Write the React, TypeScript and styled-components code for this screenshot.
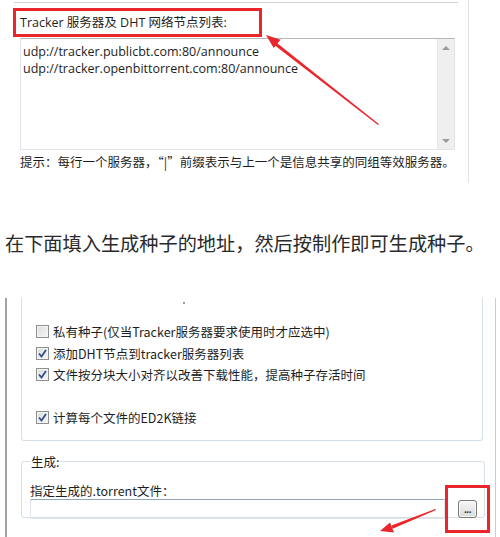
import React from 'react';
import styled, { createGlobalStyle } from 'styled-components';

const GlobalStyle = createGlobalStyle`
    html, body {
        margin: 0;
        padding: 0;
        background: #ffffff;
    }
    body {
        font-family: "Open Sans", "Noto Sans CJK SC", sans-serif;
        color: #1e1e1e;
    }
`;

const Page = styled.div`
    position: relative;
    width: 500px;
    height: 537px;
    overflow: hidden;
    background: #ffffff;
`;

const TopShot = styled.div`
    width: 468px;
    height: 181px;
    padding-top: 2px;
    border-right: 1px solid #e2e2e2;
`;

const TrackerPanel = styled.div`
    margin: 0 10px 0 14px;
    border-top: 1px solid #cfcfcf;
`;

const TitleBox = styled.div`
    display: inline-block;
    margin: 5px 0 0 -1px;
    padding: 0 4px;
    width: 235px;
    height: 23px;
    line-height: 23px;
    border: 3px solid #e8262b;
    font-size: 12.5px;
    color: #1e1e1e;
    white-space: nowrap;
`;

const TextArea = styled.div`
    display: flex;
    margin: 1px 0 0 6px;
    width: 435px;
    height: 112px;
    box-sizing: border-box;
    border: 1px solid #dfe3ea;
    border-top-color: #b4b6bd;
`;

const TextLines = styled.div`
    flex: 1;
    padding: 4px 0 0 2px;
    font-size: 12.5px;
    line-height: 17px;
    color: #1e1e1e;
`;

const ScrollBar = styled.div`
    width: 16px;
    display: flex;
    flex-direction: column;
    justify-content: space-between;
    align-items: center;
    padding: 7px 0 6px;
    background: #efefef;
    border-left: 1px solid #e6e6e6;
`;

const Arrow = styled.div<{ $down?: boolean }>`
    width: 0;
    height: 0;
    border-left: 4px solid transparent;
    border-right: 4px solid transparent;
    ${p => (p.$down ? 'border-top: 4px solid #9b9b9b;' : 'border-bottom: 4px solid #9b9b9b;')}
`;

const Hint = styled.div`
    margin: 3px 0 0 6px;
    font-size: 12.5px;
    line-height: 17px;
    color: #1e1e1e;
    font-family: "Noto Sans CJK SC", sans-serif;
    white-space: nowrap;
`;

const Caption = styled.div`
    height: 115px;
    box-sizing: border-box;
    padding: 48px 0 0 5px;
    font-family: "Noto Sans CJK SC", sans-serif;
    font-size: 19.2px;
    line-height: 24px;
    color: #2a2a2a;
    white-space: nowrap;
`;

const BottomShot = styled.div`
    position: relative;
    margin-left: 5px;
    width: 491px;
    height: 239px;
    padding: 0 12px 0 14px;
    box-sizing: border-box;
    border-left: 2px solid #a3a3a3;
    border-right: 1px solid #cdcdcd;
`;

const Speck = styled.span`
    position: absolute;
    left: 176px;
    top: 4px;
    width: 2px;
    height: 2px;
    background: #9a9a9a;
`;

const OptionsGroup = styled.div`
    height: 143px;
    box-sizing: border-box;
    padding: 23px 0 0 14px;
    border: 1px solid #d5dfe5;
    border-top: none;
    border-radius: 0 0 3px 3px;
`;

const OptionRow = styled.label<{ $gapBefore?: boolean }>`
    display: flex;
    align-items: center;
    gap: 4px;
    height: 21.5px;
    margin-top: ${p => (p.$gapBefore ? '21.5px' : '0')};
    font-family: "Noto Sans CJK SC", sans-serif;
    font-size: 12.5px;
    color: #1e1e1e;
    white-space: nowrap;
`;

const Box = styled.span`
    display: inline-flex;
    align-items: center;
    justify-content: center;
    width: 11px;
    height: 11px;
    border: 1px solid #8e8f8f;
    box-shadow: inset 0 0 0 1px #f4f4f4;
    background: linear-gradient(135deg, #dcdcdc, #f6f6f6);
`;

const OutputGroup = styled.fieldset`
    margin: 12px -2px 0 0;
    padding: 0 0 0 8px;
    height: 65px;
    border: 1px solid #d5dfe5;
    border-radius: 3px;
    box-sizing: border-box;
    min-width: 0;
`;

const Legend = styled.legend`
    padding: 0 1px;
    font-family: "Noto Sans CJK SC", sans-serif;
    font-size: 12.5px;
    line-height: 17px;
    color: #1e1e1e;
`;

const FieldLabel = styled.div`
    margin-top: 13px;
    font-family: "Noto Sans CJK SC", sans-serif;
    font-size: 12.5px;
    line-height: 16px;
    color: #1e1e1e;
`;

const FieldRow = styled.div`
    display: flex;
    align-items: center;
    gap: 13px;
    margin-top: 0;
`;

const PathInput = styled.div`
    width: 415px;
    height: 20px;
    box-sizing: border-box;
    border: 1px solid #e0e6ec;
    border-top-color: #8ea5bb;
`;

const BrowseButton = styled.div`
    width: 19px;
    height: 18px;
    box-sizing: border-box;
    border: 1px solid #777;
    border-radius: 3px;
    background: linear-gradient(#f6f6f6, #dadada);
    box-shadow: inset 0 0 0 1px #fbfbfb;
    font-family: "Liberation Sans", sans-serif;
    font-size: 10px;
    font-weight: bold;
    line-height: 18px;
    text-align: center;
    color: #333;
    letter-spacing: -0.5px;
`;

const RedFrame = styled.div`
    position: absolute;
    left: 445px;
    top: 485px;
    width: 45px;
    height: 48px;
    box-sizing: border-box;
    border: 3px solid #e8262b;
`;

const Overlay = styled.svg`
    position: absolute;
    left: 0;
    top: 0;
    pointer-events: none;
`;

const Check = () => (
    <svg width="9" height="9" viewBox="0 0 9 9">
        <path d="M1 4.5 L3.5 7.5 L8 1" fill="none" stroke="#2f4f8f" strokeWidth="1.8" />
    </svg>
);

const options = [
    { text: '私有种子(仅当Tracker服务器要求使用时才应选中)', checked: false },
    { text: '添加DHT节点到tracker服务器列表', checked: true },
    { text: '文件按分块大小对齐以改善下载性能，提高种子存活时间', checked: true },
    { text: '计算每个文件的ED2K链接', checked: true, gap: true },
];

const App: React.FC = () => (
    <Page>
        <GlobalStyle />
        <TopShot>
            <TrackerPanel>
                <TitleBox>Tracker 服务器及 DHT 网络节点列表:</TitleBox>
                <TextArea>
                    <TextLines>
                        udp://tracker.publicbt.com:80/announce
                        <br />
                        udp://tracker.openbittorrent.com:80/announce
                    </TextLines>
                    <ScrollBar>
                        <Arrow />
                        <Arrow $down />
                    </ScrollBar>
                </TextArea>
                <Hint>提示：每行一个服务器，“|”前缀表示与上一个是信息共享的同组等效服务器。</Hint>
            </TrackerPanel>
        </TopShot>
        <Caption>在下面填入生成种子的地址，然后按制作即可生成种子。</Caption>
        <BottomShot>
            <Speck />
            <OptionsGroup>
                {options.map(o => (
                    <OptionRow key={o.text} $gapBefore={o.gap}>
                        <Box>{o.checked && <Check />}</Box>
                        {o.text}
                    </OptionRow>
                ))}
            </OptionsGroup>
            <OutputGroup>
                <Legend>生成:</Legend>
                <FieldLabel>指定生成的.torrent文件：</FieldLabel>
                <FieldRow>
                    <PathInput />
                    <BrowseButton>...</BrowseButton>
                </FieldRow>
            </OutputGroup>
        </BottomShot>
        <RedFrame />
        <Overlay width="500" height="537" viewBox="0 0 500 537">
            <polygon points="378,125 378.8,124 276.6,42.8 274.6,45.3" fill="#e8262b" />
            <polygon points="266,35 280.5,39.8 273.7,48" fill="#e8262b" />
            <polygon points="436,510 435.4,509 391.4,525.5 392.6,528.8" fill="#e8262b" />
            <polygon points="380,531 390,522.6 394,532.4" fill="#e8262b" />
        </Overlay>
    </Page>
);

export default App;
